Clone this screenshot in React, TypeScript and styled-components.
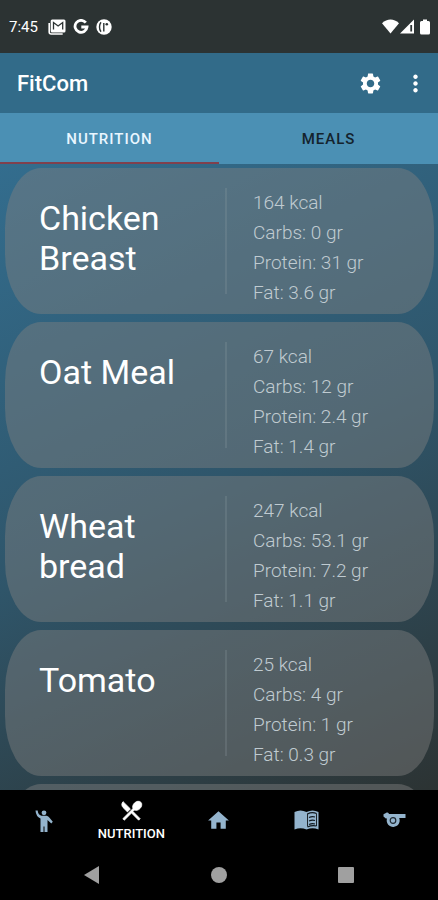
import React from "react";
import styled, { createGlobalStyle } from "styled-components";
import { MdHome, MdMoreVert, MdSettings } from "react-icons/md";

const GlobalStyle = createGlobalStyle`
  * { box-sizing: border-box; }
  body { margin: 0; background: #000; font-family: Roboto, sans-serif; }
  h1, h2, p, ul { margin: 0; padding: 0; }
  button { font: inherit; border: 0; padding: 0; background: none; color: inherit; cursor: pointer; }
`;

const Screen = styled.div`
  height: 100vh;
  display: flex;
  flex-direction: column;
  overflow: hidden;
`;

const StatusBar = styled.div`
  flex: none;
  height: 53px;
  padding: 0 8px 0 9px;
  display: flex;
  align-items: center;
  justify-content: space-between;
  background: #2c3333;
  color: #fff;
  font-size: 15px;
`;

const StatusGroup = styled.div<{ $gap: number }>`
  display: flex;
  align-items: center;
  gap: ${(p) => p.$gap}px;
`;

const Clock = styled.span`
  margin-right: 3px;
`;

const AppBar = styled.header`
  flex: none;
  height: 60px;
  padding: 0 8px 0 17px;
  display: flex;
  align-items: center;
  background: #326b89;
  color: #fff;
`;

const Title = styled.h1`
  flex: 1;
  font-size: 22px;
  font-weight: 500;
`;

const IconButton = styled.button<{ $width: number }>`
  width: ${(p) => p.$width}px;
  height: 48px;
  display: flex;
  align-items: center;
  justify-content: center;
`;

const Tabs = styled.div`
  flex: none;
  height: 51px;
  display: grid;
  grid-template-columns: 1fr 1fr;
  background: #4b90b4;
`;

const Tab = styled.button<{ $active?: boolean }>`
  && {
    padding-top: 2px;
    border-bottom: 2px solid ${(p) => (p.$active ? "#80404d" : "transparent")};
    color: ${(p) => (p.$active ? "#e9f6ff" : "#14232d")};
    font-size: 15px;
    font-weight: 500;
    letter-spacing: 1px;
  }
`;

const List = styled.ul`
  flex: 1;
  min-height: 0;
  overflow: hidden;
  list-style: none;
  display: flex;
  flex-direction: column;
  gap: 8px;
  padding: 4px 4px 0 5px;
  background: linear-gradient(155deg, #336d8e 0%, #2f566b 50%, #2c3333 100%);
`;

const Card = styled.li`
  flex: none;
  height: 146px;
  padding: 20px 16px 0 34px;
  display: grid;
  grid-template-columns: 186fr 2px 191fr;
  border-radius: 36px / 60px;
  background: rgba(128, 128, 128, 0.45);
`;

const FoodName = styled.h2`
  max-width: 160px;
  padding-top: 10px;
  color: #fff;
  font-size: 34px;
  font-weight: 400;
  line-height: 40px;
`;

const Divider = styled.div`
  height: 106px;
  background: rgba(150, 165, 170, 0.22);
`;

const Facts = styled.div`
  padding-left: 26px;
  color: #c0cbd1;
  font-size: 19px;
  font-weight: 300;
  line-height: 30px;
  white-space: nowrap;
`;

const BottomNav = styled.nav`
  flex: none;
  height: 60px;
  display: grid;
  grid-template-columns: repeat(5, 1fr);
  background: #000;
`;

const NavItem = styled.button<{ $active?: boolean }>`
  && {
    display: flex;
    flex-direction: column;
    align-items: center;
    justify-content: center;
    gap: 3px;
    color: ${(p) => (p.$active ? "#fff" : "#94b4cd")};
    font-size: 13px;
    font-weight: 500;
    line-height: 16px;
  }
`;

const SystemNav = styled.div`
  flex: none;
  height: 50px;
  padding: 0 29px;
  display: grid;
  grid-template-columns: repeat(3, 1fr);
  background: #000;
`;

const SystemButton = styled.button`
  display: flex;
  align-items: center;
  justify-content: center;
`;

const foods = [
  { name: "Chicken Breast", kcal: 164, carbs: 0, protein: 31, fat: 3.6 },
  { name: "Oat Meal", kcal: 67, carbs: 12, protein: 2.4, fat: 1.4 },
  { name: "Wheat bread", kcal: 247, carbs: 53.1, protein: 7.2, fat: 1.1 },
  { name: "Tomato", kcal: 25, carbs: 4, protein: 1, fat: 0.3 },
];

const MailIcon = () => (
  <svg width="18" height="16" viewBox="0 0 18 16">
    <path d="M1.200 4v9a2 2 0 0 0 2 2h11.500" fill="none" stroke="#fff" strokeWidth="1.600" />
    <rect x="2.700" y="0.500" width="14.800" height="13" rx="1.500" fill="#fff" />
    <path d="M5.500 10.500v-7l4.600 3.500 4.600-3.500v7" fill="none" stroke="#2c3333" strokeWidth="1.300" />
  </svg>
);

const GIcon = () => (
  <svg width="16" height="16" viewBox="0 0 16 16">
    <path d="M12.800 3.700A6 6 0 1 0 14 8H8.300" fill="none" stroke="#fff" strokeWidth="2.800" />
  </svg>
);

const CircleBadgeIcon = () => (
  <svg width="16" height="16" viewBox="0 0 16 16">
    <circle cx="8" cy="8" r="7.700" fill="#fff" />
    <path d="M5 3.200Q3.500 5 3.500 8T5 12.800M7.800 12.500V4" fill="none" stroke="#2c3333" strokeWidth="1.400" />
    <circle cx="10.800" cy="5.300" r="1.300" fill="#2c3333" />
  </svg>
);

const WifiIcon = () => (
  <svg width="17" height="15" viewBox="0 0 17 15">
    <path d="M8.500 14.500 0 4.200Q4 0.500 8.500 0.500T17 4.200Z" fill="#fff" />
  </svg>
);

const SignalIcon = () => (
  <svg width="14" height="15" viewBox="0 0 14 15">
    <path d="M0 14.500 14 0.500v14Z" fill="#fff" />
    <path d="M11.200 6v6.500" stroke="#2c3333" strokeWidth="1.800" />
  </svg>
);

const BatteryIcon = () => (
  <svg width="10" height="16" viewBox="0 0 10 16">
    <path d="M3 0.500h4v1.500h1.500q1.500 0 1.500 1.500V14q0 1.500-1.500 1.500h-7Q0 15.500 0 14V3.500Q0 2 1.500 2H3Z" fill="#fff" />
  </svg>
);

const PersonIcon = () => (
  <svg width="20" height="25" viewBox="0 0 20 25" fill="currentColor">
    <circle cx="10" cy="4.800" r="2.400" />
    <path d="M1.500 2.500h2.200q0.300 4.200 3.700 5.300h5.300q1.700 0.300 2.800 2l3.300 4-1.500 1.600-3.800-3.400V24H6.500V10.600Q1.900 8.500 1.500 2.500Z" />
    <path d="M10 18.500V24" stroke="#000" strokeWidth="1" />
  </svg>
);

const CutleryIcon = () => (
  <svg width="25" height="25" viewBox="0 0 24 24" fill="currentColor" stroke="currentColor" strokeWidth="0.800">
    <path d="M8.100 13.340l2.830-2.830L3.910 3.500a4.008 4.008 0 0 0 0 5.660l4.190 4.180z" />
    <path d="M14.880 11.530c1.530.710 3.680.210 5.270-1.380 1.910-1.910 2.280-4.650.810-6.120-1.460-1.460-4.200-1.100-6.120.810-1.590 1.590-2.090 3.740-1.380 5.270L3.700 19.870l1.410 1.410L12 14.410l6.880 6.880 1.410-1.410L13.410 13l1.470-1.470z" />
  </svg>
);

const BookIcon = () => (
  <svg width="25" height="22" viewBox="0 0 25 22">
    <path d="M0.500 3Q6.500-0.200 12.500 3q6-3.200 12 0v17.500q-6-2.500-12 0-6-2.500-12 0Z" fill="currentColor" />
    <path d="M13.500 4.500v13M22.500 4.500V17" fill="none" stroke="#000" strokeWidth="0.800" />
    <path d="M13.500 5Q18 2.500 22.500 4.500M15 8.500q3.200-1.500 6-0.500M15 12q3.200-1.500 6-0.500M15 15.500q3.200-1.500 6-0.500M13.500 18q4.500-2 9-1" fill="none" stroke="#10181e" strokeWidth="1.200" />
  </svg>
);

const WhistleIcon = () => (
  <svg width="23" height="16" viewBox="0 0 23 16">
    <path d="M2.500 1.200A2 2 0 0 1 6 2h16.500v4h-6.300A6.500 6.500 0 1 1 4 6.500H2.800L0.500 4.500V2.200Z" fill="currentColor" />
    <circle cx="10" cy="8.500" r="2.800" fill="none" stroke="#1d2730" strokeWidth="1.200" />
  </svg>
);

export default function App() {
  return (
    <Screen>
      <GlobalStyle />
      <StatusBar>
        <StatusGroup $gap={7}>
          <Clock>7:45</Clock>
          <MailIcon />
          <GIcon />
          <CircleBadgeIcon />
        </StatusGroup>
        <StatusGroup $gap={6}>
          <StatusGroup $gap={1}>
            <WifiIcon />
            <SignalIcon />
          </StatusGroup>
          <BatteryIcon />
        </StatusGroup>
      </StatusBar>
      <AppBar>
        <Title>FitCom</Title>
        <IconButton $width={60} aria-label="Settings"><MdSettings size={25} /></IconButton>
        <IconButton $width={30} aria-label="More options"><MdMoreVert size={27} /></IconButton>
      </AppBar>
      <Tabs role="tablist">
        <Tab role="tab" aria-selected $active>NUTRITION</Tab>
        <Tab role="tab" aria-selected={false}>MEALS</Tab>
      </Tabs>
      <List>
        {foods.map((f) => (
          <Card key={f.name}>
            <FoodName>{f.name}</FoodName>
            <Divider />
            <Facts>
              <p>{f.kcal} kcal</p>
              <p>Carbs: {f.carbs} gr</p>
              <p>Protein: {f.protein} gr</p>
              <p>Fat: {f.fat} gr</p>
            </Facts>
          </Card>
        ))}
        <Card aria-hidden />
      </List>
      <BottomNav>
        <NavItem aria-label="Profile"><PersonIcon /></NavItem>
        <NavItem $active><CutleryIcon />NUTRITION</NavItem>
        <NavItem aria-label="Home"><MdHome size={25} /></NavItem>
        <NavItem aria-label="Diary"><BookIcon /></NavItem>
        <NavItem aria-label="Workouts"><WhistleIcon /></NavItem>
      </BottomNav>
      <SystemNav>
        <SystemButton aria-label="Back">
          <svg width="18" height="20" viewBox="0 0 18 20"><path d="M1 10 16 1v18Z" fill="#a0a0a0" /></svg>
        </SystemButton>
        <SystemButton aria-label="Home screen">
          <svg width="18" height="18" viewBox="0 0 18 18"><circle cx="9" cy="9" r="8" fill="#a0a0a0" /></svg>
        </SystemButton>
        <SystemButton aria-label="Recent apps">
          <svg width="18" height="18" viewBox="0 0 18 18"><rect x="1" y="1" width="16" height="16" rx="1" fill="#a0a0a0" /></svg>
        </SystemButton>
      </SystemNav>
    </Screen>
  );
}
